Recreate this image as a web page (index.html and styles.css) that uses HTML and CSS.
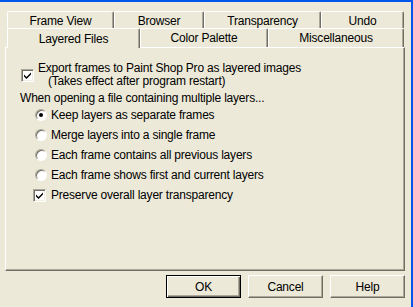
FILE: index.html
```html
<!DOCTYPE html>
<html>
<head lang="en">
    <meta charset="UTF-8">
    <title>Options</title>
    <link rel="stylesheet" href="styles.css">
</head>
<body>
<div class="window">
    <div class="tabs">
        <div class="tab-row">
            <div class="tab t-frame">Frame View</div>
            <div class="tab t-browser">Browser</div>
            <div class="tab t-trans">Transparency</div>
            <div class="tab t-undo">Undo</div>
        </div>
        <div class="tab-row front">
            <div class="tab t-layered selected">Layered Files</div>
            <div class="tab t-color">Color Palette</div>
            <div class="tab t-misc">Miscellaneous</div>
        </div>
    </div>
    <div class="panel">
        <div class="export">
            <span class="check"><svg width="9" height="9" viewBox="0 0 9 9"><path d="M1 3.5 L3.5 6 L8 1.5 L8 3.5 L3.5 8 L1 5.5 Z" fill="#000"/></svg></span>
            <div class="export-text">
                <div>Export frames to Paint Shop Pro as layered images</div>
                <div class="note">(Takes effect after program restart)</div>
            </div>
        </div>
        <div class="heading">When opening a file containing multiple layers...</div>
        <div class="option radio-opt"><span class="radio on"></span>Keep layers as separate frames</div>
        <div class="option radio-opt"><span class="radio"></span>Merge layers into a single frame</div>
        <div class="option radio-opt"><span class="radio"></span>Each frame contains all previous layers</div>
        <div class="option radio-opt"><span class="radio"></span>Each frame shows first and current layers</div>
        <div class="option check-opt"><span class="check"><svg width="9" height="9" viewBox="0 0 9 9"><path d="M1 3.5 L3.5 6 L8 1.5 L8 3.5 L3.5 8 L1 5.5 Z" fill="#000"/></svg></span>Preserve overall layer transparency</div>
    </div>
    <div class="buttons">
        <button class="btn default">OK</button>
        <button class="btn">Cancel</button>
        <button class="btn">Help</button>
    </div>
</div>
</body>
</html>
```

FILE: styles.css
```css
*{
    margin:0;
    padding:0;
    box-sizing:border-box;
}
body{
    width:413px;
    height:307px;
    overflow:hidden;
    background:#ECE9D8;
    font-family:"Liberation Sans", Arial, sans-serif;
    font-size:12px;
    letter-spacing:-0.2px;
    color:#000;
}
.window{
    width:413px;
    height:307px;
    border-top:2px solid #0055EA;
    border-right:2px solid #0055EA;
}
.tabs{
    margin:9px 0 0 7px;
    width:397px;
}
.tab-row{
    display:flex;
    height:17px;
}
.tab-row.front{
    height:19px;
}
.tab{
    display:flex;
    align-items:center;
    justify-content:center;
    padding-top:2px;
    border-top:1px solid #fff;
    border-left:1px solid #fff;
    border-right:1px solid #716F64;
    box-shadow:inset -1px 0 #ACA899;
    border-radius:2px 2px 0 0;
    background:#ECE9D8;
}
.tab-row.front .tab{
    padding-top:0;
}
.tab.selected{
    position:relative;
    z-index:1;
    height:20px;
}
.t-frame{ width:107px; }
.t-browser{ width:90px; }
.t-trans{ width:117px; }
.t-undo{ width:83px; }
.t-layered{ width:133px; }
.t-color{ width:128px; }
.t-misc{ width:136px; }

.panel{
    margin-left:5px;
    width:400px;
    height:224px;
    border-top:1px solid #fff;
    border-left:1px solid #fff;
    border-right:1px solid #716F64;
    border-bottom:1px solid #716F64;
    box-shadow:inset -1px -1px #ACA899;
    padding:14px 0 0 14px;
}
.export{
    display:flex;
    align-items:center;
    height:26px;
    padding-left:1px;
}
.export-text{
    line-height:13px;
    margin-left:4px;
}
.note{
    padding-left:10px;
}
.check{
    display:flex;
    align-items:center;
    justify-content:center;
    width:13px;
    height:13px;
    flex:none;
    background:#fff;
    border:1px solid;
    border-color:#ACA899 #fff #fff #ACA899;
    box-shadow:inset 1px 1px #716F64, inset -1px -1px #F1EFE2;
}
.heading{
    margin-top:4px;
    line-height:13px;
}
.option{
    display:flex;
    align-items:center;
    height:20px;
}
.option:first-of-type{
    margin-top:1px;
}
.radio-opt{
    padding-left:15px;
}
.check-opt{
    padding-left:13px;
}
.radio-opt .radio{
    margin-right:4px;
}
.check-opt .check{
    margin-right:5px;
}
.radio{
    display:flex;
    align-items:center;
    justify-content:center;
    width:12px;
    height:12px;
    flex:none;
    border-radius:50%;
    background:#fff;
    border:1px solid;
    border-color:#ACA899 #fff #fff #ACA899;
    box-shadow:inset 1px 1px #716F64;
}
.radio.on::after{
    content:"";
    width:4px;
    height:4px;
    border-radius:50%;
    background:#000;
}
.buttons{
    display:flex;
    justify-content:flex-end;
    gap:7px;
    margin-top:4px;
    padding-right:6px;
}
.btn{
    width:75px;
    height:23px;
    font-family:"Liberation Sans", Arial, sans-serif;
    font-size:12px;
    letter-spacing:-0.2px;
    color:#000;
    background:#ECE9D8;
    border:1px solid;
    border-color:#fff #716F64 #716F64 #fff;
    box-shadow:inset -1px -1px #ACA899;
}
.btn.default{
    border:1px solid #000;
    box-shadow:inset 1px 1px #fff, inset -1px -1px #716F64, inset -2px -2px #ACA899;
}
```
